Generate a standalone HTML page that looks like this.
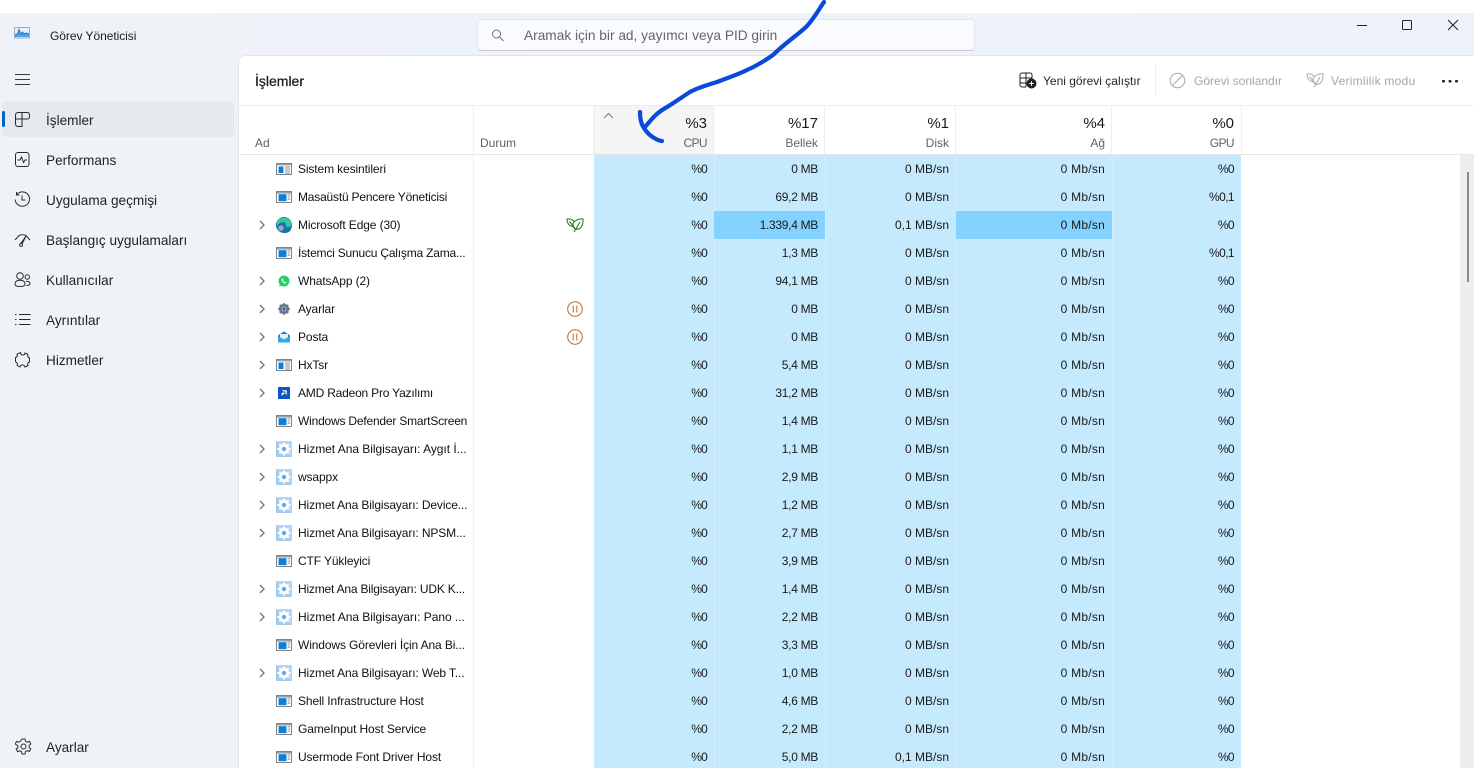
<!DOCTYPE html>
<html lang="tr"><head><meta charset="utf-8"><title>Görev Yöneticisi</title>
<style>
html,body{margin:0;padding:0;width:1474px;height:768px;overflow:hidden;background:#fff}
body{font-family:"Liberation Sans",sans-serif;font-size:12px;color:#1a1a1a;position:relative}
.a{position:absolute;white-space:nowrap}
#bg{left:0;top:13px;width:1474px;height:755px;background:linear-gradient(90deg,#eff3f8,#eef2f9 50%,#edf2fa)}
#panel{left:238px;top:55px;width:1236px;height:713px;background:#fff;border-top:1px solid #e3e5e8;border-left:1px solid #e3e5e8;border-top-left-radius:8px;box-sizing:border-box}
.nav{left:46px;font-size:13.6px;line-height:20px;color:#222}
.ni{left:14px;width:17px;height:17px;fill:none;stroke:#2a2a2a;stroke-width:1}
.num{font-size:15px;line-height:18px;top:115px;text-align:right;color:#1a1a1a}
.lbl{line-height:16px;top:135px;color:#616161;text-align:right}
.c{position:absolute;top:155px;height:616px;background:#c5e9fd;border-left:1px solid #d3eefc;box-sizing:border-box}
.r{position:absolute;left:239px;width:1002px;height:28px;line-height:28px}
.r span,.r svg{position:absolute}
.r .n{left:59px;color:#111;letter-spacing:-.12px}
.r .t{letter-spacing:-.2px}
.r .o{letter-spacing:-.04px}
.r .ic{left:37px;top:6px;width:16px;height:16px}
.r .ch{left:18px;top:9px;width:10px;height:10px;fill:none;stroke:#767676;stroke-width:1.3}
.r .v{text-align:right;color:#1a1a1a}
.v1{left:355px;width:113px;letter-spacing:-.8px}.v2{left:475px;width:104px;letter-spacing:-.3px}.v3{left:586px;width:124px}.v4{left:717px;width:149px;letter-spacing:.25px}.v5{left:873px;width:122px;letter-spacing:-.6px}
.dark{position:absolute;top:211px;height:28px;background:#83d2ff}
</style></head><body>
<svg width="0" height="0" style="position:absolute"><defs>
<symbol id="w" viewBox="0 0 16 16"><rect x=".5" y="2.5" width="15" height="11" fill="#fff" stroke="#7d8489"/><rect x="1" y="3" width="14" height="1.6" fill="#9aa1a6"/><rect x="2.5" y="5.2" width="8" height="7" fill="#0f7fd6"/><rect x="11.6" y="5.4" width="2.4" height="1" fill="#8a9096"/><rect x="11.6" y="7.6" width="2.4" height="1" fill="#8a9096"/><rect x="11.6" y="9.8" width="2.4" height="1" fill="#8a9096"/></symbol>
<symbol id="w2" viewBox="0 0 16 16"><rect x=".5" y="2.5" width="15" height="11" fill="#fff" stroke="#7d8489"/><rect x="1" y="3" width="14" height="1.4" fill="#9aa1a6"/><rect x="2.5" y="5.5" width="5" height="6.5" fill="#0f7fd6"/><path d="M9 6h5M9 8h5M9 10h5M9 12h5" stroke="#8a9096"/></symbol>
<symbol id="g" viewBox="0 0 16 16"><rect width="16" height="16" fill="#a3caee"/><path d="M0 0h16v16z" fill="#b4d5f3"/><circle cx="8" cy="8" r="3.8" fill="none" stroke="#fff" stroke-width="2.8"/><path d="M8 1.500v2.600M8 11.900v2.600M1.500 8h2.600M11.900 8h2.600M3.400 3.400l1.800 1.800M10.800 10.800l1.800 1.800M12.600 3.400l-1.800 1.800M5.200 10.800l-1.800 1.800" stroke="#fff" stroke-width="2"/><circle cx="8" cy="8" r="1.700" fill="#5b9edb"/></symbol>
<symbol id="e" viewBox="0 0 16 16"><circle cx="8" cy="8" r="8" fill="#1374b8"/><path d="M1 5C3 0 12-1.500 15.500 5.500 16.500 9 13 10.500 10 10 11 7.500 9 5 6 5.500 3.500 6 2 8 1 9z" fill="#36c8a0"/><path d="M8.500 5.500C6 4.500 2 6 1.500 10 2.500 14 6 16 9 16c3 0 5.500-1.500 6.500-4.500-2 1.500-5 1.800-7 .8" fill="#1a6fb0"/><circle cx="5" cy="11" r="2.800" fill="#9aa8b2"/></symbol>
<symbol id="wa" viewBox="0 0 16 16"><circle cx="8" cy="8" r="5.500" fill="#25d366"/><path d="M3 13.500l1-3 2 2z" fill="#25d366"/><path d="M6 5.500c-.6.6-.5 1.800.6 3.200s2.400 2 3.300 1.700l.5-1-1.300-.7-.6.500c-.6-.3-1.200-1-1.500-1.600l.4-.6-.6-1.300z" fill="#fff"/></symbol>
<symbol id="s" viewBox="0 0 16 16"><circle cx="8" cy="8" r="3.700" fill="none" stroke="#6b7784" stroke-width="2.800"/><path d="M8 2.200v2M8 11.800v2M2.200 8h2M11.800 8h2M3.900 3.900l1.400 1.400M10.700 10.700l1.400 1.400M12.100 3.900l-1.400 1.400M5.300 10.700l-1.400 1.400" stroke="#6b7784" stroke-width="2"/><circle cx="8" cy="8" r="1.700" fill="#1f5fae"/></symbol>
<symbol id="m" viewBox="0 0 16 16"><path d="M2 6.500L8 2.500l6 4V13.500H2z" fill="#0f7fd0"/><path d="M4 5h8v3.500L8 10.500 4 8.500z" fill="#dff1fb"/><path d="M2 7l6 3.500L14 7v6.500H2z" fill="#35a6e8"/></symbol>
<symbol id="am" viewBox="0 0 16 16"><rect x="2" y="2" width="12" height="12" fill="#0a56c9"/><path d="M6 5.200h4.800V10l-1.300-1.300V6.500H7.300zM5.200 9l1.500-1.500h1.800V9.300H7l-1 1.500z" fill="#fff"/></symbol>
<symbol id="cv" viewBox="0 0 10 10"><path d="M3 1l4 4-4 4"/></symbol>
<symbol id="pa" viewBox="0 0 16 16"><circle cx="8" cy="8" r="7.300" fill="none" stroke="#bc6a22" stroke-width="1"/><path d="M6.200 4.500v7M9.800 4.500v7" stroke="#bc6a22" stroke-width="1"/></symbol>
<symbol id="lf" viewBox="0 0 18 16"><path d="M7 6.500C8.500 3.500 13 1.500 17 2c.3 5.500-1.500 10-6 10.300C8.500 12.500 6.800 10 7 6.500zM7.200 9.500C3.500 9.500 1 6.500 1 2c3-.5 6 .5 7.500 3M3.500 4.500L8.800 11M14 5L8 15" fill="none" stroke="currentColor" stroke-width="1"/></symbol>
</defs></svg>

<div id="bg" class="a"></div>
<svg class="a" style="left:14px;top:27px" width="17" height="12" viewBox="0 0 17 12"><rect x=".5" y=".5" width="15" height="10.500" fill="#e8f2fb" stroke="#8fb0cf"/><path d="M1 8l2.500-1 1.500-4.500 2 5 1.500-2.500 1.500 2 2-1 3 1v3H1z" fill="#4ea6e8"/><path d="M1 8l2.500-1 1.500-4.500 2 5 1.500-2.500 1.500 2 2-1 3 1" fill="none" stroke="#1c76c8"/></svg>
<div class="a" style="left:50px;top:28px;line-height:17px;color:#1c1c1c;letter-spacing:-.05px">Görev Yöneticisi</div>
<svg class="a" style="left:15px;top:73px" width="15" height="12" viewBox="0 0 15 12" stroke="#3a3a3a"><path d="M0 1.500h15M0 6.500h15M0 11.500h15"/></svg>

<div class="a" style="left:2px;top:101px;width:232px;height:36px;background:#e6eaef;border-radius:4px"></div>
<div class="a" style="left:2px;top:111px;width:3px;height:16px;background:#0067c0;border-radius:2px"></div>

<svg class="a ni" style="top:111px" viewBox="0 0 17 17"><path d="M1.500 4a2.500 2.500 0 0 1 2.500-2.500H8V8H1.500zM8 1.500h5.500A2 2 0 0 1 15.500 3.500v2.500A2 2 0 0 1 13.500 8H8zM1.500 8H8v7.500H4A2.500 2.500 0 0 1 1.500 13z"/></svg>
<div class="a nav" style="top:111px">İşlemler</div>
<svg class="a ni" style="top:151px" viewBox="0 0 17 17"><rect x="1.500" y="1.500" width="13.500" height="14" rx="2.500"/><path d="M3.500 9h2.500l1.500-3 2 5.500 1.500-2.500h2"/></svg>
<div class="a nav" style="top:151px">Performans</div>
<svg class="a ni" style="top:191px" viewBox="0 0 17 17"><path d="M2.800 3.500A7.200 7.200 0 1 1 1.200 8.500M2.500 1v3h3M8 4.500V9h3.500"/></svg>
<div class="a nav" style="top:191px">Uygulama geçmişi</div>
<svg class="a ni" style="top:232px" viewBox="0 0 17 17"><path d="M1 8l4-4.500c2-1 5-1 7 0l4 4.500M12 4l-4 8-1-.6z"/><path d="M7.500 11.500a1.500 1.500 0 1 0 1 1"/></svg>
<div class="a nav" style="top:231px">Başlangıç uygulamaları</div>
<svg class="a ni" style="top:271px" viewBox="0 0 17 17"><circle cx="6" cy="5" r="3.300"/><circle cx="13.300" cy="6" r="2.200"/><path d="M1 13c0-2.500 1.500-3.800 5-3.800s5 1.300 5 3.800c0 1.500-1.500 2.500-5 2.500S1 14.500 1 13zM12 10.500c2.500-.4 4 .5 4 2 0 1.200-1 2-3.500 2"/></svg>
<div class="a nav" style="top:271px">Kullanıcılar</div>
<svg class="a ni" style="top:311px" viewBox="0 0 17 17"><path d="M5 3.500h11.500M5 8.500h11.500M5 13.500h11.500M1 3.500h1.500M1 8.500h1.500M1 13.500h1.500"/></svg>
<div class="a nav" style="top:311px">Ayrıntılar</div>
<svg class="a ni" style="top:351px" viewBox="0 0 17 17"><path d="M6.500 1.500c0 1.500 1 2.500 2.500 2.500s2-1 2-2l3 1.500c-.8 1.500-.2 3 1.500 3.500v4c-1.700.3-2.300 2-1.500 3.500l-3 1.500c-.3-1.200-1.200-2-2.500-2s-2.300.9-2.500 2l-3-1.800c.8-1.500.2-3-1.500-3.400V6.500c1.700-.4 2.300-1.800 1.500-3.300z"/></svg>
<div class="a nav" style="top:351px">Hizmetler</div>
<svg class="a ni" style="top:738px;left:15px" viewBox="0 0 17 17"><circle cx="8.500" cy="8.500" r="2.500"/><path d="M7 1h3l.5 2.300 1.700.9 2.200-.8 1.400 2.500-1.700 1.600v1.900l1.700 1.600-1.400 2.500-2.200-.8-1.700.9L10 16H7l-.5-2.300-1.700-.9-2.200.8-1.400-2.500 1.700-1.600V7.600L.2 6l1.400-2.600 2.200.8 1.700-.9z"/></svg>
<div class="a nav" style="top:738px">Ayarlar</div>

<div class="a" style="left:477px;top:19px;width:498px;height:32px;box-sizing:border-box;background:#f9fbfe;border:1px solid #e4e7eb;border-bottom-color:#c4c7ca;border-radius:4px"></div>
<svg class="a" style="left:491px;top:29px" width="13" height="13" viewBox="0 0 13 13" fill="none" stroke="#707070"><circle cx="5.500" cy="5" r="4"/><path d="M8.500 8l4 4"/></svg>
<div class="a" style="left:524px;top:27px;font-size:13.7px;line-height:18px;color:#666">Aramak için bir ad, yayımcı veya PID girin</div>

<svg class="a" style="left:1350px;top:15px" width="115" height="20" viewBox="0 0 115 20" fill="none" stroke="#222"><path d="M7 10.500h10"/><rect x="52.500" y="5.500" width="9" height="9" rx="1"/><path d="M98 5l10 10M108 5L98 15"/></svg>

<div id="panel" class="a"></div>
<div class="a" style="left:255px;top:72px;font-size:14px;line-height:18px;color:#1a1a1a;-webkit-text-stroke:.25px #1a1a1a">İşlemler</div>
<svg class="a" style="left:1019px;top:72px" width="18" height="17" viewBox="0 0 18 17" fill="none" stroke="#222"><path d="M8 11H3a2 2 0 0 1-2-2V3a2 2 0 0 1 2-2h8a2 2 0 0 1 2 2v4M1 6h12M7 1v14M1 9v4a2 2 0 0 0 2 2h4"/><circle cx="12.500" cy="11.500" r="4.500" fill="#222"/><path d="M10.300 11.500h4.400M12.500 9.300v4.400" stroke="#fff"/></svg>
<div class="a" style="left:1043px;top:73px;line-height:16px;color:#222">Yeni görevi çalıştır</div>
<div class="a" style="left:1155px;top:65px;width:1px;height:31px;background:#ebebeb"></div>
<svg class="a" style="left:1169px;top:72px" width="17" height="17" viewBox="0 0 17 17" fill="none" stroke="#a8a8a8"><circle cx="8.500" cy="8.500" r="7.300"/><path d="M3.500 13.500l10-10"/></svg>
<div class="a" style="left:1194px;top:73px;line-height:16px;color:#a6a6a6">Görevi sonlandır</div>
<svg class="a" style="left:1306px;top:72px;color:#a8a8a8" width="18" height="16"><use href="#lf"/></svg>
<div class="a" style="left:1331px;top:73px;line-height:16px;color:#a6a6a6;letter-spacing:.25px">Verimlilik modu</div>
<svg class="a" style="left:1442px;top:79px" width="17" height="4" viewBox="0 0 17 4" fill="#222"><rect x="0" y="1" width="3" height="2.500" rx="1"/><rect x="6.500" y="1" width="3" height="2.500" rx="1"/><rect x="13" y="1" width="3" height="2.500" rx="1"/></svg>

<div class="a" style="left:239px;top:105px;width:1235px;height:1px;background:#ededed"></div>
<div class="a" style="left:239px;top:154px;width:1235px;height:1px;background:#e6e6e6"></div>
<div class="a" style="left:594px;top:106px;width:119px;height:48px;background:#f5f5f5"></div>
<div class="a" style="left:473px;top:106px;width:1px;height:662px;background:#eeeeee"></div>
<div class="a" style="left:593px;top:106px;width:1px;height:48px;background:#eeeeee"></div>
<div class="a" style="left:713px;top:106px;width:1px;height:48px;background:#eeeeee"></div>
<div class="a" style="left:824px;top:106px;width:1px;height:48px;background:#eeeeee"></div>
<div class="a" style="left:955px;top:106px;width:1px;height:48px;background:#eeeeee"></div>
<div class="a" style="left:1111px;top:106px;width:1px;height:48px;background:#eeeeee"></div>
<div class="a" style="left:1241px;top:106px;width:1px;height:48px;background:#eeeeee"></div>

<svg class="a" style="left:603px;top:112px" width="11" height="7" viewBox="0 0 11 7" fill="none" stroke="#7a7a7a"><path d="M1 6l4.500-4.500L10 6"/></svg>
<div class="a lbl" style="left:255px">Ad</div>
<div class="a lbl" style="left:480px">Durum</div>
<div class="a num" style="left:600px;width:107px">%3</div><div class="a lbl" style="left:600px;width:107px;letter-spacing:-.6px">CPU</div>
<div class="a num" style="left:720px;width:98px">%17</div><div class="a lbl" style="left:720px;width:98px">Bellek</div>
<div class="a num" style="left:830px;width:119px">%1</div><div class="a lbl" style="left:830px;width:119px">Disk</div>
<div class="a num" style="left:960px;width:145px">%4</div><div class="a lbl" style="left:960px;width:145px">Ağ</div>
<div class="a num" style="left:1120px;width:114px">%0</div><div class="a lbl" style="left:1120px;width:114px;letter-spacing:-.6px">GPU</div>

<div class="c" style="left:594px;width:120px;border-left:0"></div>
<div class="c" style="left:714px;width:111px"></div>
<div class="c" style="left:825px;width:131px"></div>
<div class="c" style="left:956px;width:156px"></div>
<div class="c" style="left:1112px;width:129px"></div>
<div class="dark" style="left:714px;width:111px"></div>
<div class="dark" style="left:956px;width:156px"></div>

<div class="a" style="left:1460px;top:155px;width:14px;height:613px;background:#eeeeee"></div>
<div class="a" style="left:1467px;top:172px;width:2px;height:110px;background:#8a8a8a"></div>

<div class="r" style="top:155px"><svg class="ic"><use href="#w2"/></svg><span class="n">Sistem kesintileri</span><span class="v v1">%0</span><span class="v v2">0 MB</span><span class="v v3">0 MB/sn</span><span class="v v4">0 Mb/sn</span><span class="v v5">%0</span></div>
<div class="r" style="top:183px"><svg class="ic"><use href="#w"/></svg><span class="n t">Masaüstü Pencere Yöneticisi</span><span class="v v1">%0</span><span class="v v2">69,2 MB</span><span class="v v3">0 MB/sn</span><span class="v v4">0 Mb/sn</span><span class="v v5">%0,1</span></div>
<div class="r" style="top:211px"><svg class="ch"><use href="#cv"/></svg><svg class="ic"><use href="#e"/></svg><span class="n">Microsoft Edge (30)</span><svg style="left:327px;top:6px;color:#107c10" width="18" height="16"><use href="#lf"/></svg><span class="v v1">%0</span><span class="v v2">1.339,4 MB</span><span class="v v3">0,1 MB/sn</span><span class="v v4">0 Mb/sn</span><span class="v v5">%0</span></div>
<div class="r" style="top:239px"><svg class="ic"><use href="#w"/></svg><span class="n t">İstemci Sunucu Çalışma Zama...</span><span class="v v1">%0</span><span class="v v2">1,3 MB</span><span class="v v3">0 MB/sn</span><span class="v v4">0 Mb/sn</span><span class="v v5">%0,1</span></div>
<div class="r" style="top:267px"><svg class="ch"><use href="#cv"/></svg><svg class="ic"><use href="#wa"/></svg><span class="n">WhatsApp (2)</span><span class="v v1">%0</span><span class="v v2">94,1 MB</span><span class="v v3">0 MB/sn</span><span class="v v4">0 Mb/sn</span><span class="v v5">%0</span></div>
<div class="r" style="top:295px"><svg class="ch"><use href="#cv"/></svg><svg class="ic"><use href="#s"/></svg><span class="n">Ayarlar</span><svg style="left:328px;top:6px" width="16" height="16"><use href="#pa"/></svg><span class="v v1">%0</span><span class="v v2">0 MB</span><span class="v v3">0 MB/sn</span><span class="v v4">0 Mb/sn</span><span class="v v5">%0</span></div>
<div class="r" style="top:323px"><svg class="ch"><use href="#cv"/></svg><svg class="ic"><use href="#m"/></svg><span class="n">Posta</span><svg style="left:328px;top:6px" width="16" height="16"><use href="#pa"/></svg><span class="v v1">%0</span><span class="v v2">0 MB</span><span class="v v3">0 MB/sn</span><span class="v v4">0 Mb/sn</span><span class="v v5">%0</span></div>
<div class="r" style="top:351px"><svg class="ch"><use href="#cv"/></svg><svg class="ic"><use href="#w2"/></svg><span class="n">HxTsr</span><span class="v v1">%0</span><span class="v v2">5,4 MB</span><span class="v v3">0 MB/sn</span><span class="v v4">0 Mb/sn</span><span class="v v5">%0</span></div>
<div class="r" style="top:379px"><svg class="ch"><use href="#cv"/></svg><svg class="ic"><use href="#am"/></svg><span class="n t">AMD Radeon Pro Yazılımı</span><span class="v v1">%0</span><span class="v v2">31,2 MB</span><span class="v v3">0 MB/sn</span><span class="v v4">0 Mb/sn</span><span class="v v5">%0</span></div>
<div class="r" style="top:407px"><svg class="ic"><use href="#w"/></svg><span class="n t">Windows Defender SmartScreen</span><span class="v v1">%0</span><span class="v v2">1,4 MB</span><span class="v v3">0 MB/sn</span><span class="v v4">0 Mb/sn</span><span class="v v5">%0</span></div>
<div class="r" style="top:435px"><svg class="ch"><use href="#cv"/></svg><svg class="ic"><use href="#g"/></svg><span class="n o">Hizmet Ana Bilgisayarı: Aygıt İ...</span><span class="v v1">%0</span><span class="v v2">1,1 MB</span><span class="v v3">0 MB/sn</span><span class="v v4">0 Mb/sn</span><span class="v v5">%0</span></div>
<div class="r" style="top:463px"><svg class="ch"><use href="#cv"/></svg><svg class="ic"><use href="#g"/></svg><span class="n">wsappx</span><span class="v v1">%0</span><span class="v v2">2,9 MB</span><span class="v v3">0 MB/sn</span><span class="v v4">0 Mb/sn</span><span class="v v5">%0</span></div>
<div class="r" style="top:491px"><svg class="ch"><use href="#cv"/></svg><svg class="ic"><use href="#g"/></svg><span class="n">Hizmet Ana Bilgisayarı: Device...</span><span class="v v1">%0</span><span class="v v2">1,2 MB</span><span class="v v3">0 MB/sn</span><span class="v v4">0 Mb/sn</span><span class="v v5">%0</span></div>
<div class="r" style="top:519px"><svg class="ch"><use href="#cv"/></svg><svg class="ic"><use href="#g"/></svg><span class="n">Hizmet Ana Bilgisayarı: NPSM...</span><span class="v v1">%0</span><span class="v v2">2,7 MB</span><span class="v v3">0 MB/sn</span><span class="v v4">0 Mb/sn</span><span class="v v5">%0</span></div>
<div class="r" style="top:547px"><svg class="ic"><use href="#w"/></svg><span class="n">CTF Yükleyici</span><span class="v v1">%0</span><span class="v v2">3,9 MB</span><span class="v v3">0 MB/sn</span><span class="v v4">0 Mb/sn</span><span class="v v5">%0</span></div>
<div class="r" style="top:575px"><svg class="ch"><use href="#cv"/></svg><svg class="ic"><use href="#g"/></svg><span class="n t">Hizmet Ana Bilgisayarı: UDK K...</span><span class="v v1">%0</span><span class="v v2">1,4 MB</span><span class="v v3">0 MB/sn</span><span class="v v4">0 Mb/sn</span><span class="v v5">%0</span></div>
<div class="r" style="top:603px"><svg class="ch"><use href="#cv"/></svg><svg class="ic"><use href="#g"/></svg><span class="n o">Hizmet Ana Bilgisayarı: Pano ...</span><span class="v v1">%0</span><span class="v v2">2,2 MB</span><span class="v v3">0 MB/sn</span><span class="v v4">0 Mb/sn</span><span class="v v5">%0</span></div>
<div class="r" style="top:631px"><svg class="ic"><use href="#w"/></svg><span class="n">Windows Görevleri İçin Ana Bi...</span><span class="v v1">%0</span><span class="v v2">3,3 MB</span><span class="v v3">0 MB/sn</span><span class="v v4">0 Mb/sn</span><span class="v v5">%0</span></div>
<div class="r" style="top:659px"><svg class="ch"><use href="#cv"/></svg><svg class="ic"><use href="#g"/></svg><span class="n">Hizmet Ana Bilgisayarı: Web T...</span><span class="v v1">%0</span><span class="v v2">1,0 MB</span><span class="v v3">0 MB/sn</span><span class="v v4">0 Mb/sn</span><span class="v v5">%0</span></div>
<div class="r" style="top:687px"><svg class="ic"><use href="#w"/></svg><span class="n">Shell Infrastructure Host</span><span class="v v1">%0</span><span class="v v2">4,6 MB</span><span class="v v3">0 MB/sn</span><span class="v v4">0 Mb/sn</span><span class="v v5">%0</span></div>
<div class="r" style="top:715px"><svg class="ic"><use href="#w"/></svg><span class="n">GameInput Host Service</span><span class="v v1">%0</span><span class="v v2">2,2 MB</span><span class="v v3">0 MB/sn</span><span class="v v4">0 Mb/sn</span><span class="v v5">%0</span></div>
<div class="r" style="top:743px"><svg class="ic"><use href="#w"/></svg><span class="n">Usermode Font Driver Host</span><span class="v v1">%0</span><span class="v v2">5,0 MB</span><span class="v v3">0,1 MB/sn</span><span class="v v4">0 Mb/sn</span><span class="v v5">%0</span></div>

<svg class="a" style="left:0;top:0" width="1474" height="160" viewBox="0 0 1474 160" fill="none" stroke="#0a4ad8" stroke-width="4.200" stroke-linecap="round" stroke-linejoin="round"><path d="M824 2C819 9 815 17 807 26 799 34 785 43 773 55 763 62 756 66 747 70 737 75 727 78 717 82 707 85 697 88 690 92 682 97 674 103 667 107 660 111 655 115 651 120L645 127"/><path d="M640 112C640 119 641 124 644 128 647 133 652 137 656 139 658 140 660 141 662 141"/></svg>
</body></html>
